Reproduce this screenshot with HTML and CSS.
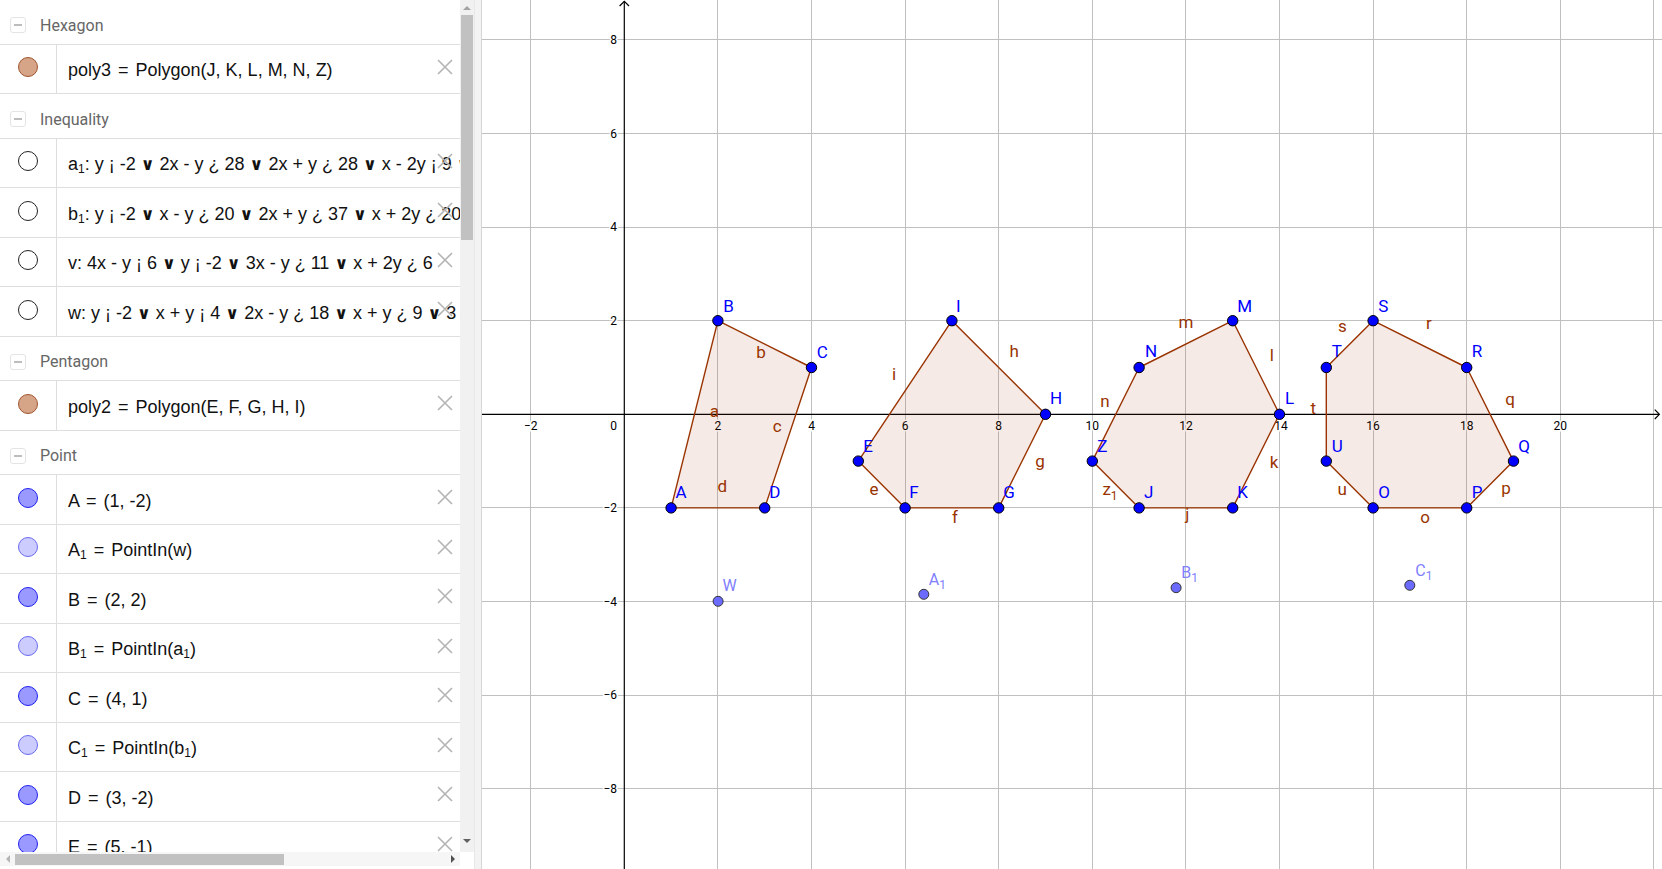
FILE: index.html
```html
<!DOCTYPE html>
<html>
<head>
<meta charset="utf-8">
<title>Polygons</title>
<link rel="stylesheet" href="styles.css">
</head>
<body>
<div class="app">
  <div class="algebra">
    <div class="alg-main">
      <div class="list">
        <div class="hdr"><span class="tog"></span><span class="hdr-txt">Hexagon</span></div>
        <div class="item"><div class="ico-cell"><span class="ico poly"></span></div><div class="txt">poly3 <span class="eq">=</span> Polygon(J, K, L, M, N, Z)</div><svg class="del" viewBox="0 0 16 16"><path d="M1 1L15 15M15 1L1 15"/></svg></div>
        <div class="hdr"><span class="tog"></span><span class="hdr-txt">Inequality</span></div>
        <div class="item"><div class="ico-cell"><span class="ico ineq"></span></div><div class="txt">a<sub>1</sub>: y ¡ -2 <span class="or">∨</span> 2x - y ¿ 28 <span class="or">∨</span> 2x + y ¿ 28 <span class="or">∨</span> x - 2y ¡ 9 <span class="or">∨</span> x</div><svg class="del" viewBox="0 0 16 16"><path d="M1 1L15 15M15 1L1 15"/></svg></div>
        <div class="item"><div class="ico-cell"><span class="ico ineq"></span></div><div class="txt">b<sub>1</sub>: y ¡ -2 <span class="or">∨</span> x - y ¿ 20 <span class="or">∨</span> 2x + y ¿ 37 <span class="or">∨</span> x + 2y ¿ 20</div><svg class="del" viewBox="0 0 16 16"><path d="M1 1L15 15M15 1L1 15"/></svg></div>
        <div class="item"><div class="ico-cell"><span class="ico ineq"></span></div><div class="txt">v: 4x - y ¡ 6 <span class="or">∨</span> y ¡ -2 <span class="or">∨</span> 3x - y ¿ 11 <span class="or">∨</span> x + 2y ¿ 6</div><svg class="del" viewBox="0 0 16 16"><path d="M1 1L15 15M15 1L1 15"/></svg></div>
        <div class="item"><div class="ico-cell"><span class="ico ineq"></span></div><div class="txt">w: y ¡ -2 <span class="or">∨</span> x + y ¡ 4 <span class="or">∨</span> 2x - y ¿ 18 <span class="or">∨</span> x + y ¿ 9 <span class="or">∨</span> 3</div><svg class="del" viewBox="0 0 16 16"><path d="M1 1L15 15M15 1L1 15"/></svg></div>
        <div class="hdr"><span class="tog"></span><span class="hdr-txt">Pentagon</span></div>
        <div class="item"><div class="ico-cell"><span class="ico poly"></span></div><div class="txt">poly2 <span class="eq">=</span> Polygon(E, F, G, H, I)</div><svg class="del" viewBox="0 0 16 16"><path d="M1 1L15 15M15 1L1 15"/></svg></div>
        <div class="hdr"><span class="tog"></span><span class="hdr-txt">Point</span></div>
        <div class="item"><div class="ico-cell"><span class="ico free"></span></div><div class="txt">A <span class="eq">=</span> (1, -2)</div><svg class="del" viewBox="0 0 16 16"><path d="M1 1L15 15M15 1L1 15"/></svg></div>
        <div class="item"><div class="ico-cell"><span class="ico dep"></span></div><div class="txt">A<sub>1</sub> <span class="eq">=</span> PointIn(w)</div><svg class="del" viewBox="0 0 16 16"><path d="M1 1L15 15M15 1L1 15"/></svg></div>
        <div class="item"><div class="ico-cell"><span class="ico free"></span></div><div class="txt">B <span class="eq">=</span> (2, 2)</div><svg class="del" viewBox="0 0 16 16"><path d="M1 1L15 15M15 1L1 15"/></svg></div>
        <div class="item"><div class="ico-cell"><span class="ico dep"></span></div><div class="txt">B<sub>1</sub> <span class="eq">=</span> PointIn(a<sub>1</sub>)</div><svg class="del" viewBox="0 0 16 16"><path d="M1 1L15 15M15 1L1 15"/></svg></div>
        <div class="item"><div class="ico-cell"><span class="ico free"></span></div><div class="txt">C <span class="eq">=</span> (4, 1)</div><svg class="del" viewBox="0 0 16 16"><path d="M1 1L15 15M15 1L1 15"/></svg></div>
        <div class="item"><div class="ico-cell"><span class="ico dep"></span></div><div class="txt">C<sub>1</sub> <span class="eq">=</span> PointIn(b<sub>1</sub>)</div><svg class="del" viewBox="0 0 16 16"><path d="M1 1L15 15M15 1L1 15"/></svg></div>
        <div class="item"><div class="ico-cell"><span class="ico free"></span></div><div class="txt">D <span class="eq">=</span> (3, -2)</div><svg class="del" viewBox="0 0 16 16"><path d="M1 1L15 15M15 1L1 15"/></svg></div>
        <div class="item"><div class="ico-cell"><span class="ico free"></span></div><div class="txt">E <span class="eq">=</span> (5, -1)</div><svg class="del" viewBox="0 0 16 16"><path d="M1 1L15 15M15 1L1 15"/></svg></div>
      </div>
      <div class="vscroll">
        <div class="varrow"><span class="tri-up"></span></div>
        <div class="vthumb"></div>
        <div class="vspace"></div>
        <div class="varrow down"><span class="tri-down"></span></div>
      </div>
    </div>
    <div class="hscroll-row">
      <div class="hscroll">
        <div class="harrow"><span class="tri-left"></span></div>
        <div class="hthumb"></div>
        <div class="hspace"></div>
        <div class="harrow"><span class="tri-right"></span></div>
      </div>
      <div class="corner"></div>
    </div>
  </div>
  <div class="splitter"></div>
  <div class="graphics">
    <svg class="canvas" width="1180" height="869" viewBox="0 0 1180 869">
      <g class="grid">
        <line x1="48.7" y1="0" x2="48.7" y2="869"/>
        <line x1="235.9" y1="0" x2="235.9" y2="869"/>
        <line x1="329.5" y1="0" x2="329.5" y2="869"/>
        <line x1="423.1" y1="0" x2="423.1" y2="869"/>
        <line x1="516.7" y1="0" x2="516.7" y2="869"/>
        <line x1="610.3" y1="0" x2="610.3" y2="869"/>
        <line x1="703.9" y1="0" x2="703.9" y2="869"/>
        <line x1="797.5" y1="0" x2="797.5" y2="869"/>
        <line x1="891.1" y1="0" x2="891.1" y2="869"/>
        <line x1="984.7" y1="0" x2="984.7" y2="869"/>
        <line x1="1078.3" y1="0" x2="1078.3" y2="869"/>
        <line x1="1171.9" y1="0" x2="1171.9" y2="869"/>
        <line x1="0" y1="39.9" x2="1180" y2="39.9"/>
        <line x1="0" y1="133.5" x2="1180" y2="133.5"/>
        <line x1="0" y1="227.1" x2="1180" y2="227.1"/>
        <line x1="0" y1="320.7" x2="1180" y2="320.7"/>
        <line x1="0" y1="507.9" x2="1180" y2="507.9"/>
        <line x1="0" y1="601.5" x2="1180" y2="601.5"/>
        <line x1="0" y1="695.1" x2="1180" y2="695.1"/>
        <line x1="0" y1="788.7" x2="1180" y2="788.7"/>
      </g>
      <g class="axes">
        <line x1="0" y1="414.3" x2="1177" y2="414.3"/>
        <line x1="142.3" y1="1.5" x2="142.3" y2="869"/>
        <polyline points="1172.8,409.6 1177.4,414.3 1172.8,419"/>
        <polyline points="137.6,6 142.3,1.3 147,6"/>
      </g>
      <g class="nums">
        <text x="48.7" y="430" class="mid">−2</text>
        <text x="135" y="430" class="end">0</text>
        <text x="235.9" y="430" class="mid">2</text>
        <text x="329.5" y="430" class="mid">4</text>
        <text x="423.1" y="430" class="mid">6</text>
        <text x="516.7" y="430" class="mid">8</text>
        <text x="610.3" y="430" class="mid">10</text>
        <text x="703.9" y="430" class="mid">12</text>
        <text x="799" y="430" class="mid">14</text>
        <text x="891.1" y="430" class="mid">16</text>
        <text x="984.7" y="430" class="mid">18</text>
        <text x="1078.3" y="430" class="mid">20</text>
        <text x="135" y="44" class="end">8</text>
        <text x="135" y="137.6" class="end">6</text>
        <text x="135" y="231.2" class="end">4</text>
        <text x="135" y="324.8" class="end">2</text>
        <text x="135" y="512" class="end">−2</text>
        <text x="135" y="605.6" class="end">−4</text>
        <text x="135" y="699.2" class="end">−6</text>
        <text x="135" y="792.8" class="end">−8</text>
      </g>
      <g class="polys">
        <polygon points="189.1,507.9 235.9,320.7 329.5,367.5 282.7,507.9"/>
        <polygon points="376.3,461.1 423.1,507.9 516.7,507.9 563.5,414.3 469.9,320.7"/>
        <polygon points="657.1,507.9 750.7,507.9 797.5,414.3 750.7,320.7 657.1,367.5 610.3,461.1"/>
        <polygon points="891.1,507.9 984.7,507.9 1031.5,461.1 984.7,367.5 891.1,320.7 844.3,367.5 844.3,461.1"/>
      </g>
      <g class="elabels">
        <text x="232.3" y="417.3">a</text>
        <text x="279" y="358.3">b</text>
        <text x="295.3" y="432">c</text>
        <text x="240.3" y="491.7">d</text>
        <text x="392" y="495">e</text>
        <text x="473" y="523.3">f</text>
        <text x="558" y="466.7">g</text>
        <text x="532.3" y="356.7">h</text>
        <text x="412" y="380">i</text>
        <text x="705.3" y="520">j</text>
        <text x="792" y="468.3">k</text>
        <text x="789.7" y="360.7">l</text>
        <text x="704" y="328.3">m</text>
        <text x="623" y="407.3">n</text>
        <text x="628" y="495">z<tspan dy="5" class="sub">1</tspan></text>
        <text x="943" y="522.7">o</text>
        <text x="1024" y="493.5">p</text>
        <text x="1028" y="405">q</text>
        <text x="947" y="329">r</text>
        <text x="860.3" y="332.3">s</text>
        <text x="831.3" y="414">t</text>
        <text x="860.3" y="495">u</text>
      </g>
      <g class="pts">
        <circle cx="189.1" cy="507.9" r="5.2"/>
        <circle cx="235.9" cy="320.7" r="5.2"/>
        <circle cx="329.5" cy="367.5" r="5.2"/>
        <circle cx="282.7" cy="507.9" r="5.2"/>
        <circle cx="376.3" cy="461.1" r="5.2"/>
        <circle cx="423.1" cy="507.9" r="5.2"/>
        <circle cx="516.7" cy="507.9" r="5.2"/>
        <circle cx="563.5" cy="414.3" r="5.2"/>
        <circle cx="469.9" cy="320.7" r="5.2"/>
        <circle cx="657.1" cy="507.9" r="5.2"/>
        <circle cx="750.7" cy="507.9" r="5.2"/>
        <circle cx="797.5" cy="414.3" r="5.2"/>
        <circle cx="750.7" cy="320.7" r="5.2"/>
        <circle cx="657.1" cy="367.5" r="5.2"/>
        <circle cx="610.3" cy="461.1" r="5.2"/>
        <circle cx="891.1" cy="507.9" r="5.2"/>
        <circle cx="984.7" cy="507.9" r="5.2"/>
        <circle cx="1031.5" cy="461.1" r="5.2"/>
        <circle cx="984.7" cy="367.5" r="5.2"/>
        <circle cx="891.1" cy="320.7" r="5.2"/>
        <circle cx="844.3" cy="367.5" r="5.2"/>
        <circle cx="844.3" cy="461.1" r="5.2"/>
      </g>
      <g class="plabels">
        <text x="193.5" y="498.3">A</text>
        <text x="241.3" y="311.7">B</text>
        <text x="334.7" y="358.3">C</text>
        <text x="287.3" y="498.3">D</text>
        <text x="381.3" y="451.7">E</text>
        <text x="427.3" y="498.3">F</text>
        <text x="521.3" y="498.3">G</text>
        <text x="568" y="404">H</text>
        <text x="474" y="311.7">I</text>
        <text x="662" y="498.3">J</text>
        <text x="755.3" y="498.3">K</text>
        <text x="803" y="404">L</text>
        <text x="755.3" y="311.7">M</text>
        <text x="663" y="357.3">N</text>
        <text x="615.3" y="451.7">Z</text>
        <text x="896.3" y="498.3">O</text>
        <text x="989.7" y="498.3">P</text>
        <text x="1036.3" y="451.7">Q</text>
        <text x="989.7" y="357.3">R</text>
        <text x="896.3" y="311.7">S</text>
        <text x="849.7" y="357.3">T</text>
        <text x="849.7" y="451.7">U</text>
      </g>
      <g class="dpts">
        <circle cx="236.1" cy="601.3" r="5"/>
        <circle cx="441.8" cy="594.3" r="5"/>
        <circle cx="694.1" cy="587.7" r="5"/>
        <circle cx="927.8" cy="585.3" r="5"/>
      </g>
      <g class="dlabels">
        <text x="240.5" y="590.7">W</text>
        <text x="446.8" y="585">A<tspan dy="4" class="sub">1</tspan></text>
        <text x="699.2" y="577.7">B<tspan dy="4" class="sub">1</tspan></text>
        <text x="933.3" y="575.7">C<tspan dy="4" class="sub">1</tspan></text>
      </g>
    </svg>
  </div>
</div>
</body>
</html>
```

FILE: styles.css
```css
* { box-sizing: border-box; }
html, body { margin: 0; padding: 0; }
body {
  width: 1662px;
  height: 869px;
  overflow: hidden;
  background: #ffffff;
  font-family: "Liberation Sans", Arial, sans-serif;
}
.app { display: flex; height: 869px; }

/* ---------- algebra view ---------- */
.algebra {
  width: 474px;
  flex: none;
  display: flex;
  flex-direction: column;
  background: #fff;
}
.alg-main { display: flex; height: 852px; }
.list { width: 460px; overflow: hidden; flex: none; }

.hdr {
  height: 44.5px;
  display: flex;
  align-items: center;
  padding-top: 7px;
  border-bottom: 1px solid #dedede;
}
.tog {
  width: 16px;
  height: 16px;
  margin-left: 10px;
  border: 1px solid #e4e4e4;
  border-radius: 3px;
  display: flex;
  align-items: center;
  justify-content: center;
}
.tog::before {
  content: "";
  width: 8px;
  height: 2px;
  background: #bdbdbd;
}
.hdr-txt {
  margin-left: 14px;
  font-family: Roboto, "Liberation Sans", sans-serif;
  font-size: 16px;
  color: #666666;
}

.item {
  position: relative;
  height: 49.5px;
  display: flex;
  border-bottom: 1px solid #dedede;
}
.ico-cell {
  width: 57px;
  flex: none;
  border-right: 1px solid #dedede;
  display: flex;
  align-items: center;
  justify-content: center;
  padding-bottom: 3px;
}
.ico {
  width: 20px;
  height: 20px;
  border-radius: 50%;
  display: block;
}
.ico.poly { background: #d6a487; border: 1px solid #a1552f; }
.ico.ineq { background: #fff; border: 1.4px solid #222; }
.ico.free { background: #9999ff; border: 1px solid #2020ee; }
.ico.dep { background: #ccccff; border: 1px solid #6a6aee; }

.txt {
  padding-left: 11px;
  padding-top: 4px;
  align-self: center;
  white-space: nowrap;
  font-size: 18px;
  color: #111;
}
.txt .eq { margin: 0 2px; }
.txt .or { font-family: "DejaVu Sans", sans-serif; font-weight: bold; font-size: 17px; }
.txt sub { font-size: 12px; vertical-align: -3px; line-height: 0; }

.del {
  position: absolute;
  left: 437px;
  top: 14px;
  width: 16px;
  height: 16px;
  fill: none;
  stroke: #b4b4b4;
  stroke-width: 1.6;
}

/* vertical scrollbar */
.vscroll {
  width: 14px;
  flex: none;
  background: #f1f1f1;
  display: flex;
  flex-direction: column;
  align-items: center;
}
.varrow {
  height: 15px;
  width: 12px;
  display: flex;
  align-items: center;
  justify-content: center;
}
.varrow.down { height: 18px; align-items: flex-start; padding-top: 5px; }
.tri-up { width: 0; height: 0; border-left: 4px solid transparent; border-right: 4px solid transparent; border-bottom: 4px solid #a3a3a3; }
.tri-down { width: 0; height: 0; border-left: 4px solid transparent; border-right: 4px solid transparent; border-top: 4px solid #606060; }
.vthumb { width: 12px; height: 225px; background: #c1c1c1; }
.vspace { flex: 1; }

/* horizontal scrollbar */
.hscroll-row { display: flex; height: 14px; }
.hscroll {
  width: 460px;
  display: flex;
  align-items: center;
  background: #f6f6f6;
}
.harrow { width: 15px; height: 14px; display: flex; align-items: center; justify-content: center; }
.tri-left { width: 0; height: 0; border-top: 4px solid transparent; border-bottom: 4px solid transparent; border-right: 4px solid #b5b5b5; }
.tri-right { width: 0; height: 0; border-top: 4px solid transparent; border-bottom: 4px solid transparent; border-left: 4px solid #505050; }
.hthumb { width: 269px; height: 11px; background: #c1c1c1; }
.hspace { flex: 1; }
.corner { width: 14px; background: #fff; }

/* splitter */
.splitter {
  width: 8px;
  flex: none;
  background: #f3f3f3;
  border-left: 1px solid #e8e8e8;
  border-right: 1px solid #d6d6d6;
}

/* ---------- graphics view ---------- */
.graphics { flex: 1; overflow: hidden; background: #fff; }
.canvas { display: block; }
.grid line { stroke: #c0c0c0; stroke-width: 1; shape-rendering: crispEdges; }
.axes line, .axes polyline { stroke: #000; stroke-width: 1.2; fill: none; }
.nums text {
  font-family: Roboto, "Liberation Sans", sans-serif;
  font-size: 12px;
  fill: #000;
  stroke: #fff;
  stroke-width: 3px;
  paint-order: stroke;
}
.nums .mid { text-anchor: middle; }
.nums .end { text-anchor: end; }
.polys polygon { fill: rgba(153, 51, 0, 0.1); stroke: #993300; stroke-width: 1.4; stroke-linejoin: round; }
.elabels text {
  font-family: Roboto, "Liberation Sans", sans-serif;
  font-size: 17px;
  fill: #993300;
  text-anchor: middle;
}
.pts circle { fill: #0000ff; stroke: #000; stroke-width: 1; }
.plabels text {
  font-family: Roboto, "Liberation Sans", sans-serif;
  font-size: 17px;
  fill: #0000ff;
}
.dpts circle { fill: #6b6bff; stroke: #333; stroke-width: 1; }
.dlabels text {
  font-family: Roboto, "Liberation Sans", sans-serif;
  font-size: 16px;
  fill: #8080ff;
}
.sub { font-size: 12px; }
```
